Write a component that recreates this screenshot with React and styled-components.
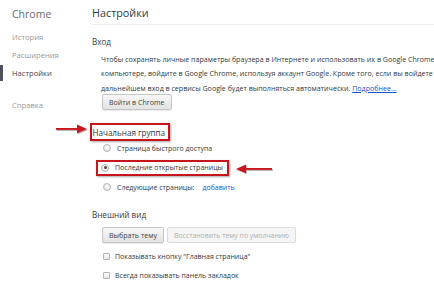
import React from 'react';
import styled, { createGlobalStyle } from 'styled-components';

const Global = createGlobalStyle`
  html, body {
    margin: 0;
    padding: 0;
    background: #fff;
    overflow: hidden;
  }
  body {
    font-family: "Open Sans", "Noto Sans", sans-serif;
    color: #303942;
  }
`;

const Page = styled.div`
  display: flex;
  width: 434px;
  height: 289px;
  overflow: hidden;
`;

const Sidebar = styled.nav`
  width: 92px;
  flex-shrink: 0;
  padding-top: 4px;
`;

const Brand = styled.div`
  padding-left: 12px;
  font-size: 10.5px;
  line-height: 20px;
  height: 20px;
  color: #6b6b6b;
  margin-bottom: 4px;
`;

const NavItem = styled.div`
  position: relative;
  height: 18px;
  line-height: 18px;
  padding-left: 12px;
  font-size: 7.6px;
  color: ${p => (p.active ? '#444' : '#999')};
  margin-top: ${p => (p.gap ? '14px' : '0')};
  &::before {
    content: '';
    display: ${p => (p.active ? 'block' : 'none')};
    position: absolute;
    left: 0;
    top: 1px;
    width: 3px;
    height: 16px;
    background: #4c535b;
  }
`;

const Main = styled.main`
  flex: 1;
  padding-top: 4px;
  min-width: 0;
`;

const Title = styled.h1`
  margin: 0;
  box-sizing: border-box;
  height: 21px;
  font-weight: normal;
  font-size: 10.8px;
  line-height: 18px;
  color: #303942;
  border-bottom: 1px solid #eeeeee;
`;

const Section = styled.section`
  margin-top: ${p => p.top}px;
`;

const SectionTitle = styled.h3`
  margin: 0;
  font-weight: normal;
  font-size: 8.1px;
  line-height: 12px;
  color: #303942;
`;

const Body = styled.div`
  padding-left: 10px;
  font-size: 7.1px;
  color: #303942;
  white-space: nowrap;
`;

const Paragraph = styled.p`
  margin: 3.75px 0 0 -1px;
  line-height: 14.5px;
`;

const Link = styled.a`
  color: #1155cc;
  text-decoration: ${p => (p.plain ? 'none' : 'underline')};
  margin-left: ${p => (p.plain ? '2px' : '0')};
`;

const Button = styled.button`
  font-family: inherit;
  font-size: ${p => (p.disabled ? '6.9px' : '7.1px')};
  height: 16px;
  padding: 0 6px;
  border: 1px solid ${p => (p.disabled ? '#dcdcdc' : '#c6c6c6')};
  border-radius: 2px;
  background: ${p => (p.disabled ? '#f5f5f5' : 'linear-gradient(#f7f7f7, #e3e3e3)')};
  color: ${p => (p.disabled ? '#b0b0b0' : '#444')};
  box-shadow: ${p => (p.disabled ? 'none' : '0 1px 0 rgba(0,0,0,0.08)')};
`;

const ButtonRow = styled.div`
  display: flex;
  gap: 3px;
  margin-top: ${p => p.top}px;
`;

const Options = styled.div`
  padding-left: 11px;
  margin-top: ${p => p.top}px;
`;

const Option = styled.label`
  display: flex;
  align-items: center;
  gap: ${p => (p.check ? '5px' : '6px')};
  height: ${p => p.h || 19.5}px;
  font-size: 7px;
  color: #303942;
  white-space: nowrap;
`;

const Radio = styled.span`
  box-sizing: border-box;
  width: 8px;
  height: 8px;
  border-radius: 50%;
  border: 1px solid #b4b4b4;
  background: radial-gradient(circle at 50% 40%, #fff, #dcdcdc);
  display: flex;
  align-items: center;
  justify-content: center;
  &::after {
    content: '';
    display: ${p => (p.checked ? 'block' : 'none')};
    width: 3px;
    height: 3px;
    border-radius: 50%;
    background: #4a4a4a;
  }
`;

const Check = styled.span`
  box-sizing: border-box;
  width: 7px;
  height: 7px;
  border-radius: 1px;
  border: 1px solid #b4b4b4;
  background: linear-gradient(#fff, #e6e6e6);
`;

const Marked = styled.div`
  position: relative;
  box-sizing: border-box;
  display: flex;
  width: fit-content;
  align-items: center;
  border: 2px solid #c8141c;
  box-shadow: 1px 1px 2px rgba(0, 0, 0, 0.35);
`;

const StartupTitle = styled(Marked)`
  margin-left: -2.5px;
  height: 18px;
  padding: 0 3px 0 1px;
  font-size: 8.1px;
`;

const MarkedOption = styled(Marked)`
  margin-left: -7px;
  height: 16px;
  padding: 0 4px 0 3px;
  gap: 6px;
`;

const ArrowBox = styled.svg`
  position: absolute;
  top: 50%;
  margin-top: ${p => p.dy}px;
  ${p => (p.side === 'left' ? 'right: calc(100% + 5px);' : 'left: calc(100% + 9px);')}
  transform: translateY(-50%);
  overflow: visible;
`;

const Arrow = ({ side, width, dy = 0 }) => (
  <ArrowBox side={side} dy={dy} width={width} height="10" viewBox={`0 0 ${width} 10`}>
    <defs>
      <filter id={`sh-${side}`} x="-10%" y="-50%" width="130%" height="200%">
        <feDropShadow dx="0.8" dy="1" stdDeviation="0.6" floodOpacity="0.35" />
      </filter>
    </defs>
    {side === 'left' ? (
      <g filter={`url(#sh-${side})`} fill="#c8141c">
        <rect x="0" y="4" width={width - 9} height="1.8" />
        <polygon points={`${width - 10},0.5 ${width},4.9 ${width - 10},9.3`} />
      </g>
    ) : (
      <g filter={`url(#sh-${side})`} fill="#c8141c">
        <rect x="9" y="4" width={width - 9} height="1.8" />
        <polygon points="10,0.5 0,4.9 10,9.3" />
      </g>
    )}
  </ArrowBox>
);

export default function App() {
  return (
    <Page>
      <Global />
      <Sidebar>
        <Brand>Chrome</Brand>
        <NavItem>История</NavItem>
        <NavItem>Расширения</NavItem>
        <NavItem active>Настройки</NavItem>
        <NavItem gap>Справка</NavItem>
      </Sidebar>
      <Main>
        <Title>Настройки</Title>

        <Section top={11}>
          <SectionTitle>Вход</SectionTitle>
          <Body>
            <Paragraph>
              Чтобы сохранять личные параметры браузера в Интернете и использовать их в Google Chrome на
              <br />
              компьютере, войдите в Google Chrome, используя аккаунт Google. Кроме того, если вы войдете в Google Chrome, в
              <br />
              дальнейшем вход в сервисы Google будет выполняться автоматически. <Link href="#">Подробнее...</Link>
            </Paragraph>
            <ButtonRow top={-1}>
              <Button>Войти в Chrome</Button>
            </ButtonRow>
          </Body>
        </Section>

        <Section top={13}>
          <StartupTitle>
            Начальная группа
            <Arrow side="left" width={31} dy={-3} />
          </StartupTitle>
          <Options top={-2.75}>
            <Option>
              <Radio />
              Страница быстрого доступа
            </Option>
            <Option>
              <MarkedOption>
                <Radio checked />
                Последние открытые страницы
                <Arrow side="right" width={36} dy={1} />
              </MarkedOption>
            </Option>
            <Option>
              <Radio />
              Следующие страницы:<Link plain href="#">добавить</Link>
            </Option>
          </Options>
        </Section>

        <Section top={12}>
          <SectionTitle>Внешний вид</SectionTitle>
          <Body>
            <ButtonRow top={6}>
              <Button>Выбрать тему</Button>
              <Button disabled>Восстановить тему по умолчанию</Button>
            </ButtonRow>
          </Body>
          <Options top={3.5}>
            <Option check h={19}>
              <Check />
              Показывать кнопку "Главная страница"
            </Option>
            <Option check h={19}>
              <Check />
              Всегда показывать панель закладок
            </Option>
          </Options>
        </Section>
      </Main>
    </Page>
  );
}
